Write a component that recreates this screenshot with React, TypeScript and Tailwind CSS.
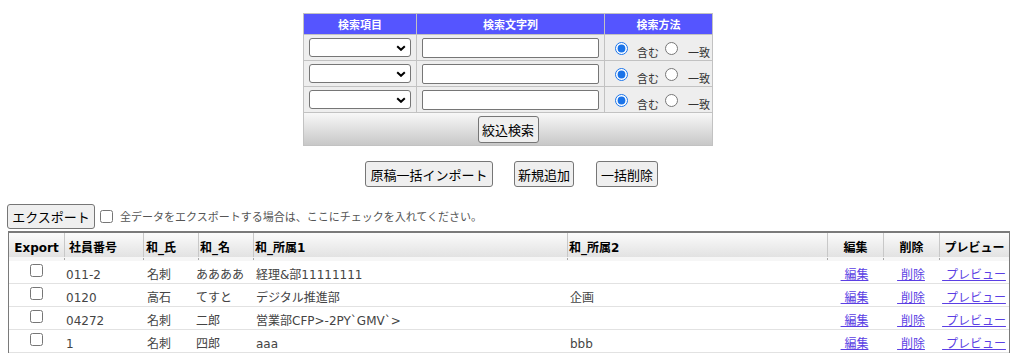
import React from 'react';

const rows = [
  { id: '011-2', shi: '名刺', mei: 'ああああ', s1: '経理&部11111111', s2: '' },
  { id: '0120', shi: '高石', mei: 'てすと', s1: 'デジタル推進部', s2: '企画' },
  { id: '04272', shi: '名刺', mei: '二郎', s1: '営業部CFP>-2PY`GMV`>', s2: '' },
  { id: '1', shi: '名刺', mei: '四郎', s1: 'aaa', s2: 'bbb' },
];

const cols = 'grid grid-cols-[55px_79px_55px_55px_314px_260px_56px_56px_70px]';

function SearchRow() {
  return (
    <>
      <div className="h-[25px] bg-[#eeeeee] flex items-center">
        <div className="relative ml-[5px] flex">
          <select className="appearance-none w-[102px] h-[19px] border border-[#767676] rounded-[3px] bg-white" />
          <svg className="absolute right-[5px] top-[7px]" width="10" height="6" viewBox="0 0 10 6">
            <path d="M1.2 1.2 L5 4.8 L8.8 1.2" stroke="#000" strokeWidth="2" fill="none" />
          </svg>
        </div>
      </div>
      <div className="h-[25px] bg-[#eeeeee] flex items-center">
        <input type="text" className="ml-[5px] w-[177px] h-[20px] border border-[#767676] rounded-[2px] bg-white" />
      </div>
      <div className="h-[25px] bg-[#eeeeee] flex items-start pt-[7px] text-[11px] text-[#333] font-['Noto_Sans_CJK_JP',sans-serif]">
        <input type="radio" defaultChecked className="m-0 ml-[10px] w-[13px] h-[13px] accent-[#1a73e8]" />
        <span className="ml-[9px] mt-[3px] leading-[14px]">含む</span>
        <input type="radio" className="m-0 ml-[6px] w-[13px] h-[13px]" />
        <span className="ml-[10px] mt-[3px] leading-[14px]">一致</span>
      </div>
    </>
  );
}

const btn =
  "bg-[#efefef] border border-[#767676] rounded-[3px] text-[13px] text-black flex items-center justify-center font-['Noto_Sans_CJK_JP',sans-serif] leading-none";

export default function App() {
  return (
    <div className="w-[1019px] h-[355px] overflow-hidden bg-white font-['DejaVu_Sans','Noto_Sans_CJK_JP',sans-serif]">
      {/* search table */}
      <div className="flex justify-center pr-[3px] pt-[13px]">
        <div className="w-[410px] bg-[#c2c2c2] p-px grid grid-cols-[112px_187px_107px] gap-px">
          {['検索項目', '検索文字列', '検索方法'].map((h) => (
            <div
              key={h}
              className="h-[20px] bg-[#5555ff] text-white text-[11px] font-bold flex items-center justify-center font-['Noto_Sans_CJK_JP',sans-serif] leading-none"
            >
              {h}
            </div>
          ))}
          <SearchRow />
          <SearchRow />
          <SearchRow />
          <div className="col-span-3 h-[32px] bg-linear-to-b from-[#f8f8f8] to-[#c8c8c8] flex items-center justify-center">
            <button className={`${btn} w-[61px] h-[27px]`}>絞込検索</button>
          </div>
        </div>
      </div>

      {/* action buttons */}
      <div className="mt-[15px] flex justify-center pl-[4px] gap-[21px]">
        <button className={`${btn} w-[128px] h-[26px]`}>原稿一括インポート</button>
        <button className={`${btn} w-[60px] h-[26px]`}>新規追加</button>
        <button className={`${btn} w-[62px] h-[26px] ml-[1px]`}>一括削除</button>
      </div>

      {/* export row */}
      <div className="mt-[17px] ml-[7px] flex items-center">
        <button className={`${btn} w-[88px] h-[25px]`}>エクスポート</button>
        <input type="checkbox" className="m-0 ml-[5px] w-[13px] h-[13px]" />
        <span className="ml-[7px] text-[11px] text-[#555] font-['Noto_Sans_CJK_JP',sans-serif] leading-none">
          全データをエクスポートする場合は、ここにチェックを入れてください。
        </span>
      </div>

      {/* main table */}
      <div className="mt-[2px] ml-[8px] w-[1002px] border-l border-r border-t-2 border-[#7a7a7a]">
        <div className={`${cols} h-[24px] bg-linear-to-b from-[#fbfbfb] to-[#e2e2e2] text-[12px] font-bold text-black`}>
          <div className="flex items-center justify-center pt-[5px] leading-[14px]">Export</div>
          <div className="flex items-center pt-[5px] pl-[4px] border-l border-[#c8c8c8] leading-[14px]">社員番号</div>
          <div className="flex items-center pt-[5px] pl-[2px] border-l border-[#c8c8c8] leading-[14px]">和_氏</div>
          <div className="flex items-center pt-[5px] pl-[1px] border-l border-[#c8c8c8] leading-[14px]">和_名</div>
          <div className="flex items-center pt-[5px] pl-[1px] border-l border-[#c8c8c8] leading-[14px]">和_所属1</div>
          <div className="flex items-center pt-[5px] pl-[1px] border-l border-[#c8c8c8] leading-[14px]">和_所属2</div>
          <div className="flex items-center justify-center pt-[5px] border-l border-[#c8c8c8] leading-[14px]">編集</div>
          <div className="flex items-center justify-center pt-[5px] border-l border-[#c8c8c8] leading-[14px]">削除</div>
          <div className="flex items-center justify-center pt-[5px] border-l border-[#c8c8c8] leading-[14px]">プレビュー</div>
        </div>
        <div className={`${cols} h-[4px] bg-[#f6f6f6]`}>
          {Array.from({ length: 9 }).map((_, i) => (
            <div key={i} className="flex">
              {i > 0 && <div className="w-px h-[2px] mt-px bg-[#a8a8a8]" />}
            </div>
          ))}
        </div>
        {rows.map((r) => (
          <div key={r.id} className={`${cols} h-[23px] border-b border-[#e2e2e2] text-[12px] text-[#444] leading-[14px]`}>
            <div className="flex justify-center pt-[3px]">
              <input type="checkbox" className="m-0 w-[13px] h-[13px]" />
            </div>
            <div className="pt-[7px] pl-[2px] whitespace-nowrap">{r.id}</div>
            <div className="pt-[7px] pl-[4px] whitespace-nowrap">{r.shi}</div>
            <div className="pt-[7px] -ml-[2px] whitespace-nowrap">{r.mei}</div>
            <div className="pt-[7px] pl-[3px] whitespace-nowrap">{r.s1}</div>
            <div className="pt-[7px] pl-[3px] whitespace-nowrap">{r.s2}</div>
            <div className="pt-[7px] flex justify-center">
              <a href="#" className="text-[#5b3fe4] underline whitespace-pre pr-[1px]">{'\u00a0編集'}</a>
            </div>
            <div className="pt-[7px] flex justify-center">
              <a href="#" className="text-[#5b3fe4] underline whitespace-pre">{'\u00a0削除'}</a>
            </div>
            <div className="pt-[7px] flex justify-center">
              <a href="#" className="text-[#5b3fe4] underline whitespace-pre">{'\u00a0プレビュー'}</a>
            </div>
          </div>
        ))}
      </div>
    </div>
  );
}
